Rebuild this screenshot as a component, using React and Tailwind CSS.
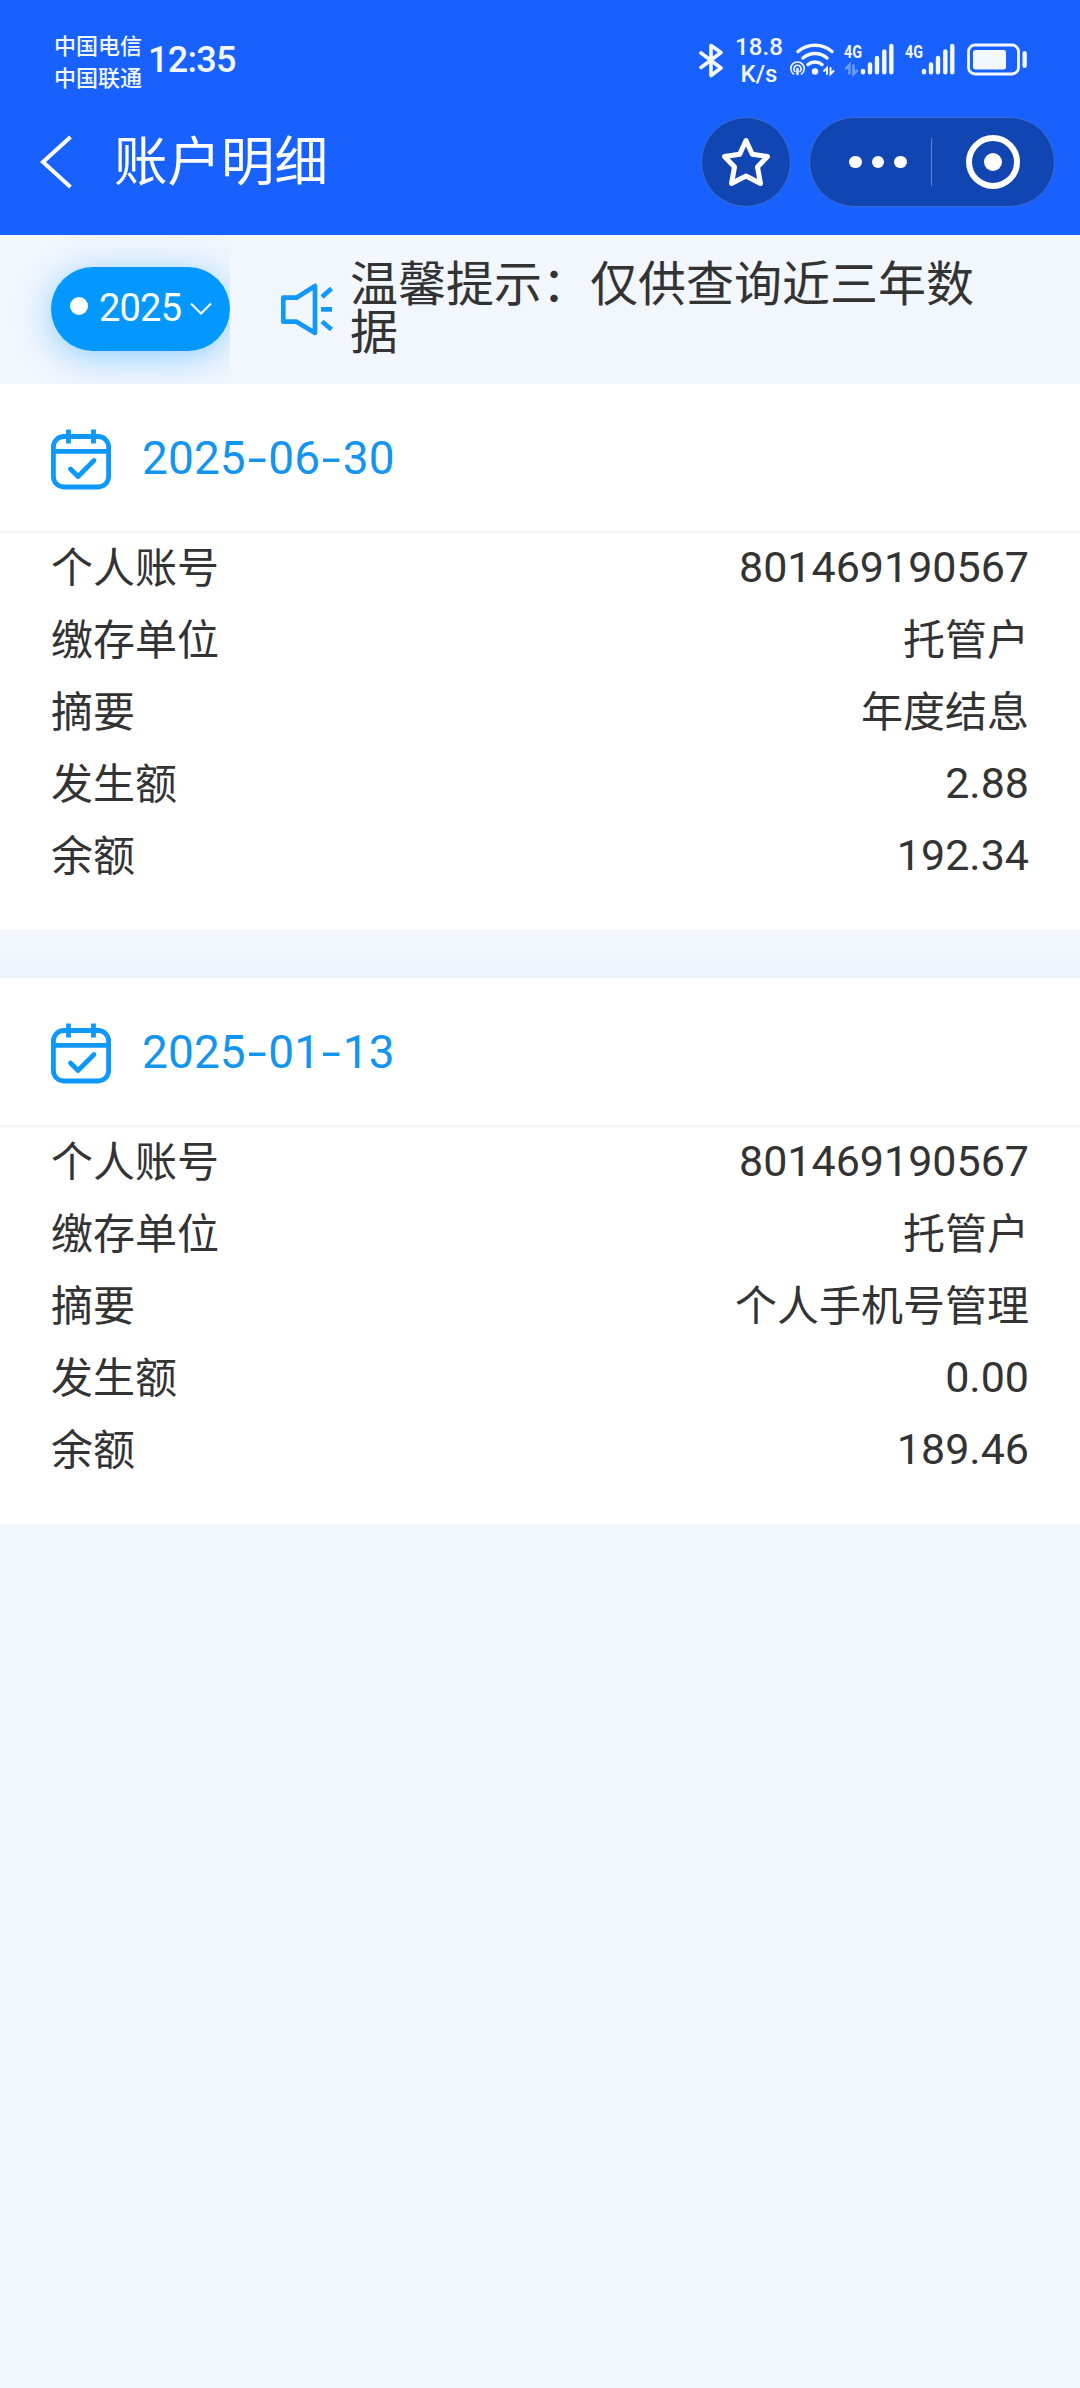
const records = [
  {
    date: ["2025", "06", "30"],
    rows: [
      ["个人账号", "801469190567", true],
      ["缴存单位", "托管户", false],
      ["摘要", "年度结息", false],
      ["发生额", "2.88", true],
      ["余额", "192.34", true],
    ],
  },
  {
    date: ["2025", "01", "13"],
    rows: [
      ["个人账号", "801469190567", true],
      ["缴存单位", "托管户", false],
      ["摘要", "个人手机号管理", false],
      ["发生额", "0.00", true],
      ["余额", "189.46", true],
    ],
  },
];

function Signal({ data }) {
  return (
    <svg className="h-[36px] w-[51px]" viewBox="0 0 51 36" fill="none">
      <text x="0" y="16.500" fill="#f3f8ff" fontSize="18.500" fontWeight="700" textLength="18" lengthAdjust="spacingAndGlyphs" fontFamily="Roboto, sans-serif">4G</text>
      {data && (
        <path d="M1.500 28l4-4v9.500M9.500 23.500v9.500l4-4" stroke="#6b9bff" strokeWidth="2.600" />
      )}
      <g stroke="#f3f8ff" strokeWidth="4.400" strokeLinecap="round">
        <path d="M19 30v1.300M26 23.500v7.800M33 17v14.300M40.300 10.500v20.800M47.300 5v26.300" />
      </g>
    </svg>
  );
}

function StatusBar() {
  return (
    <div className="flex h-[90px] items-start text-[#f3f8ff]">
      <div className="ml-[54px] mt-[28px] w-[90px] text-[22px] leading-[32px] font-medium">
        <div>中国电信</div>
        <div>中国联通</div>
      </div>
      <div className="mt-[39px] ml-[4px] w-[90px] whitespace-nowrap font-[Roboto] text-[36px] leading-[42px] font-medium tracking-[-0.700px]">12:35</div>
      <svg className="mt-[42px] ml-[460px] h-[36px] w-[26px]" viewBox="0 0 26 36" fill="none" stroke="#f3f8ff" strokeWidth="3.600" strokeLinejoin="round" strokeLinecap="round">
        <path d="M3 11l20 15-10 7.500V3.500L23 10.500 3 25.500" />
      </svg>
      <div className="mt-[34px] ml-[8px] w-[54px] text-center font-[Roboto] text-[24px] leading-[27px] font-medium">
        <div className="tracking-[0.100px]">18.8</div>
        <div>K/s</div>
      </div>
      <svg className="mt-[41px] ml-[4px] h-[36px] w-[46px]" viewBox="0 0 46 36" fill="none" stroke="#f3f8ff" strokeLinecap="round">
        <path d="M8 10.500c9.500-8.500 24.500-8.500 34 0M13 17c7-6 17-6 24 0M18 23.500c4-3.500 10-3.500 14 0" strokeWidth="3.500" />
        <circle cx="25" cy="30.500" r="3.200" fill="#f3f8ff" stroke="none" />
        <path d="M3.500 33a6.700 6.700 0 1 1 8 0M5 30.500a3.600 3.600 0 1 1 5 0" strokeWidth="1.600" />
        <path d="M7.500 28v5" strokeWidth="2.500" />
        <path d="M34 30l3-3v6M40.500 27v6l3-3" strokeWidth="2" />
      </svg>
      <div className="mt-[41px] ml-[8px] flex gap-[10px]">
        <Signal data />
        <Signal />
      </div>
      <svg className="mt-[42px] ml-[10px] h-[35px] w-[62px]" viewBox="0 0 62 35" fill="none">
        <rect x="2.500" y="3" width="50" height="29" rx="6.500" stroke="#f3f8ff" strokeWidth="2.800" />
        <rect x="7" y="8" width="33" height="19.500" rx="2.500" fill="#f3f8ff" />
        <rect x="56.500" y="9" width="4.300" height="17" rx="2" fill="#f3f8ff" />
      </svg>
    </div>
  );
}

function TitleBar() {
  return (
    <div className="flex h-[145px] items-start">
      <svg className="mt-[45px] ml-[39px] h-[54px] w-[34px]" viewBox="0 0 34 54" fill="none" stroke="white" strokeWidth="4">
        <path d="M31.500 2L4 27l27.500 25" />
      </svg>
      <h1 className="mt-[38px] ml-[41px] w-[220px] whitespace-nowrap text-[53.500px] leading-[60px] font-normal text-white">账户明细</h1>
      <button className="mt-[27px] ml-[367px] flex size-[90px] items-center justify-center rounded-full border border-[#396cd0] bg-[#1145b1]">
        <svg className="size-[52px]" viewBox="0 0 52 52" fill="none" stroke="white" strokeWidth="5" strokeLinejoin="round">
          <path d="M26 4.500L32.300 18.300 47.500 20.500 37.500 31 40.500 47.500 26 40 11.500 47.500 14.500 31 4.500 20.500 19.700 18.300z" />
        </svg>
      </button>
      <div className="mt-[27px] ml-[18px] flex h-[90px] w-[246px] items-center rounded-full border border-[#396cd0] bg-[#1145b1]">
        <div className="flex w-[121px] gap-[10px] pl-[39px]">
          <span className="size-[12.500px] rounded-full bg-white" />
          <span className="size-[12.500px] rounded-full bg-white" />
          <span className="size-[12.500px] rounded-full bg-white" />
        </div>
        <div className="h-[48px] w-px bg-[#5b83d6]" />
        <div className="ml-[34px] flex size-[54px] items-center justify-center rounded-full border-6 border-white">
          <span className="size-[18px] rounded-full bg-white" />
        </div>
      </div>
    </div>
  );
}

function NoticeBar() {
  return (
    <div className="flex h-[149px] items-start overflow-hidden">
      <div className="h-[149px] w-[230px] overflow-hidden pt-[32px] pl-[51px]">
        <button className="flex h-[84px] w-[179px] items-center rounded-full bg-[#0398ff] pl-[19px] text-white shadow-[0_6px_36px_rgba(3,152,255,0.42)]">
          <span className="mb-[6px] size-[18px] rounded-full bg-white" />
          <span className="mt-[-2px] ml-[11px] w-[82px] font-[Roboto] text-[38px] leading-[44px] font-normal tracking-[-0.800px]">2025</span>
          <svg className="ml-[8px] h-[14px] w-[24px]" viewBox="0 0 24 14" fill="none" stroke="white" strokeWidth="2">
            <path d="M2 1.500l10 10 10-10" />
          </svg>
        </button>
      </div>
      <svg className="mt-[47px] ml-[50px] h-[54px] w-[54px]" viewBox="0 0 54 54" fill="none" stroke="#1298fb" strokeWidth="4.700" strokeLinejoin="round">
        <path d="M3.300 15.700H16.500L35 4v47L16.500 39.700H3.300z" />
        <path d="M42 15l9.500-8.500M41 27.300h11M42 39.500l9.500 8" />
      </svg>
      <p className="mt-[21px] ml-[16px] w-[640px] text-[48px] leading-[48px] text-[#333]">温馨提示：仅供查询近三年数据</p>
    </div>
  );
}

function Dash() {
  return <span className="inline-block w-[22.500px] scale-x-[1.500] text-center">-</span>;
}

function RecordCard({ date, rows }) {
  return (
    <section className="h-[546px] bg-white">
      <header className="flex h-[149px] items-start border-b-2 border-[#f5f5f5]">
        <svg className="mt-[44px] ml-[50px] size-[62px]" viewBox="0 0 62 62" fill="none" stroke="#0d98fa" strokeWidth="4.800" strokeLinecap="butt" strokeLinejoin="round">
          <rect x="3.400" y="8.500" width="55.200" height="50.500" rx="10.500" />
          <path d="M3.500 23.400h55M18.500 1.500v14M43.500 1.500v14" />
          <path d="M20.500 41l7.500 7.500 16-16" strokeLinecap="round" />
        </svg>
        <div className="mt-[47px] ml-[30px] whitespace-nowrap font-[Roboto] text-[46px] leading-[54px] text-[#1295f0]">
          <span className="tracking-[0.100px]">{date[0]}</span><Dash /><span className="tracking-[0.100px]">{date[1]}</span><Dash /><span className="tracking-[0.100px]">{date[2]}</span>
        </div>
      </header>
      <dl className="mt-[-1px] px-[51px] text-[#333]">
        {rows.map(([label, value, numeric]) => (
          <div key={label} className="flex h-[72px] items-start justify-between">
            <dt className="mt-[-3px] text-[42px] leading-[72px]">{label}</dt>
            <dd className={numeric ? "mt-[-1px] font-[Roboto] text-[43px] leading-[72px]" : "mt-[-3px] text-[42px] leading-[72px]"}>{value}</dd>
          </div>
        ))}
      </dl>
    </section>
  );
}

export default function App() {
  return (
    <div className="min-h-[2388px] w-[1080px] bg-[#f2f6fd] font-['Noto_Sans_CJK_SC',sans-serif]">
      <div className="bg-[#1861ff]">
        <StatusBar />
        <TitleBar />
      </div>
      <NoticeBar />
      <main>
        <RecordCard {...records[0]} />
        <div className="h-[48px] bg-linear-to-b from-[#f2f6fd] from-40% to-[#ebf3fb]" />
        <RecordCard {...records[1]} />
      </main>
    </div>
  );
}
